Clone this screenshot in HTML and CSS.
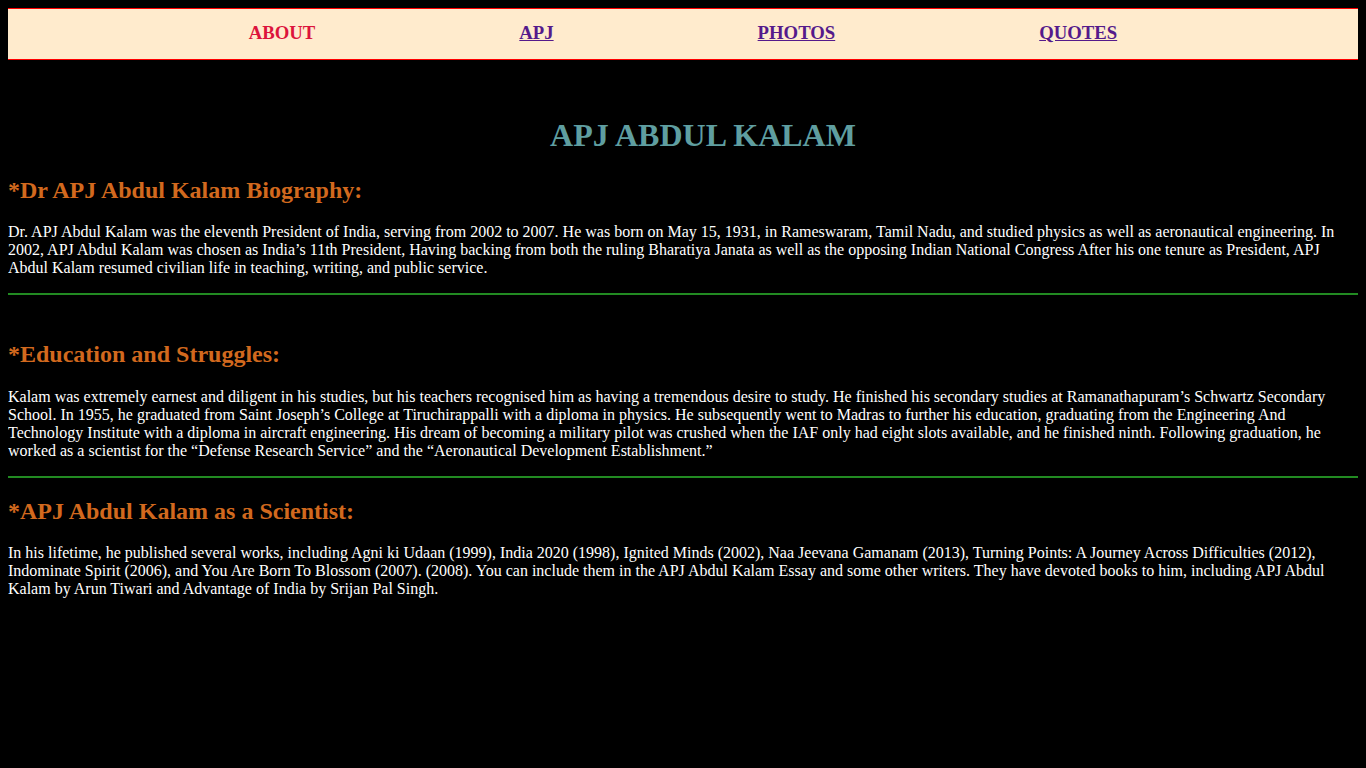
FILE: index.html
```html
<!DOCTYPE html>
<html lang="en">
<head>
<meta charset="utf-8">
<title>APJ Abdul Kalam</title>
<link rel="stylesheet" href="styles.css">
</head>
<body>
<nav class="topnav">
  <a class="nav-link active" href="#about">ABOUT</a>
  <a class="nav-link" href="#apj">APJ</a>
  <a class="nav-link" href="#photos">PHOTOS</a>
  <a class="nav-link" href="#quotes">QUOTES</a>
</nav>
<h1 class="title">APJ ABDUL KALAM</h1>
<section class="section">
  <h2 class="heading">*Dr APJ Abdul Kalam Biography:</h2>
  <p class="text">Dr. APJ Abdul Kalam was the eleventh President of India, serving from 2002 to 2007. He was born on May 15, 1931, in Rameswaram, Tamil Nadu, and studied physics as well as aeronautical engineering. In 2002, APJ Abdul Kalam was chosen as India’s 11th President, Having backing from both the ruling Bharatiya Janata as well as the opposing Indian National Congress After his one tenure as President, APJ Abdul Kalam resumed civilian life in teaching, writing, and public service.</p>
</section>
<hr class="divider">
<section class="section section-spaced">
  <h2 class="heading">*Education and Struggles:</h2>
  <p class="text">Kalam was extremely earnest and diligent in his studies, but his teachers recognised him as having a tremendous desire to study. He finished his secondary studies at Ramanathapuram’s Schwartz Secondary School. In 1955, he graduated from Saint Joseph’s College at Tiruchirappalli with a diploma in physics. He subsequently went to Madras to further his education, graduating from the Engineering And Technology Institute with a diploma in aircraft engineering. His dream of becoming a military pilot was crushed when the IAF only had eight slots available, and he finished ninth. Following graduation, he worked as a scientist for the “Defense Research Service” and the “Aeronautical Development Establishment.”</p>
</section>
<hr class="divider">
<section class="section">
  <h2 class="heading">*APJ Abdul Kalam as a Scientist:</h2>
  <p class="text">In his lifetime, he published several works, including Agni ki Udaan (1999), India 2020 (1998), Ignited Minds (2002), Naa Jeevana Gamanam (2013), Turning Points: A Journey Across Difficulties (2012), Indominate Spirit (2006), and You Are Born To Blossom (2007). (2008). You can include them in the APJ Abdul Kalam Essay and some other writers. They have devoted books to him, including APJ Abdul Kalam by Arun Tiwari and Advantage of India by Srijan Pal Singh.</p>
</section>
</body>
</html>
```

FILE: styles.css
```css
html {
  background: #000;
}
body {
  margin: 8px;
  background: #000;
  color: #fff;
  font-family: "Liberation Serif", "Times New Roman", serif;
  font-size: 16px;
}
.topnav {
  display: flex;
  justify-content: center;
  align-items: center;
  gap: 204px;
  height: 48px;
  padding-bottom: 2px;
  background: #ffebcd;
  border-top: 1px solid #ff0000;
  border-bottom: 1px solid #ff0000;
}
.nav-link {
  font-size: 18.72px;
  font-weight: bold;
  color: #551a8b;
  text-decoration: underline;
}
.nav-link.active {
  color: #dc143c;
  text-decoration: none;
}
.title {
  margin: 57px 0 23px;
  padding-left: 40px;
  text-align: center;
  font-size: 32px;
  color: #5f9ea0;
}
.heading {
  margin: 20px 0 0;
  font-size: 24px;
  color: #d2691e;
}
.text {
  margin: 19px 0 16px;
  line-height: 18px;
}
.section-spaced .text {
  margin-top: 20px;
}
.divider {
  margin: 0;
  height: 2px;
  border: 0;
  background: #228b22;
}
.section-spaced {
  padding-top: 26px;
}
```
